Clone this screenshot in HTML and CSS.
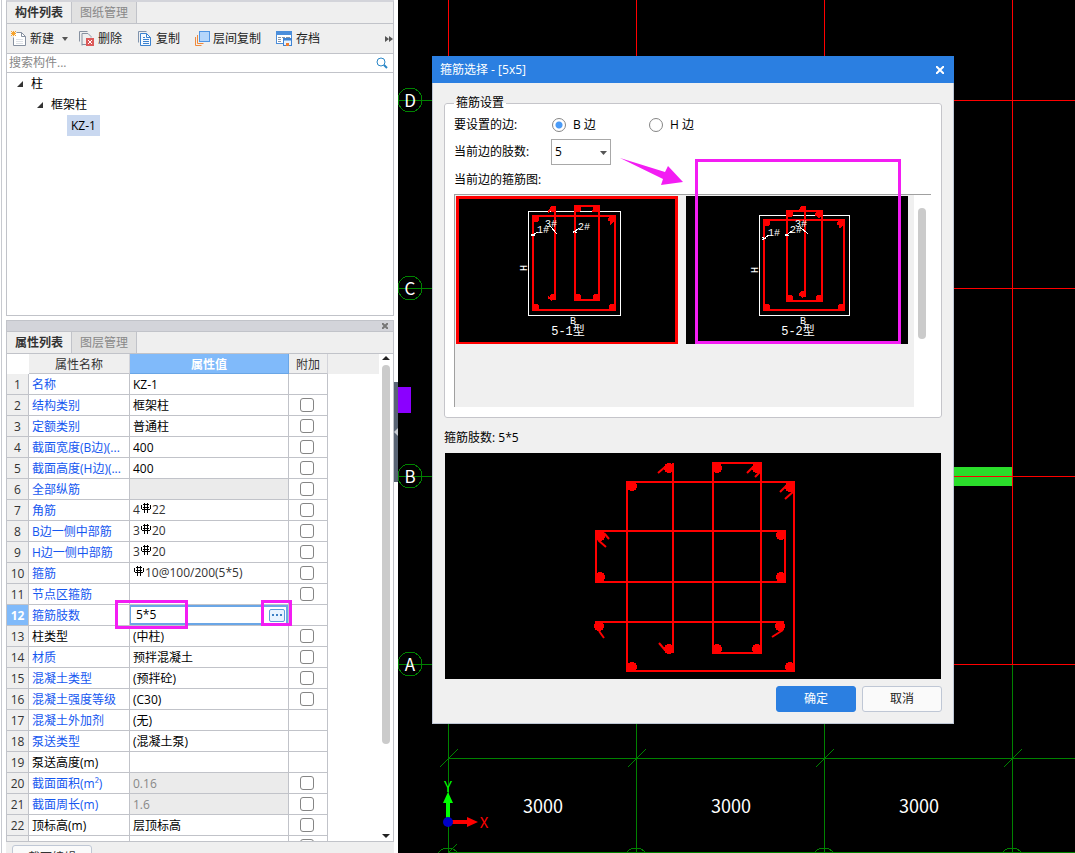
FILE: index.html
```html
<!DOCTYPE html>
<html lang="zh-CN">
<head>
<meta charset="utf-8">
<title>箍筋选择</title>
<link rel="stylesheet" href="styles.css">
</head>
<body>
<svg class="defs" aria-hidden="true">
  <symbol id="rebar" viewBox="0 0 10 10"><path d="M2 1.500h6M.5 2v4M9.500 2v4M1 6.500h8M3.500 0v10M6.500 0v10M2 4.500h6" fill="none" stroke="#000" shape-rendering="crispEdges"/></symbol>
</svg>
<div class="app">
  <aside class="sidebar">
    <section class="panel components">
      <nav class="tabs"><button class="tab active">构件列表</button><button class="tab">图纸管理</button></nav>
      <div class="toolbar">
        <button class="tool new"><svg width="15" height="15"><path d="M5.500 1.500h5l4 4v9h-12v-8" fill="#fff" stroke="#8791a0"/><path d="M10.500 1.500v4h4" fill="none" stroke="#8791a0"/><path d="M5 8.500h7M5 10.500h7M5 12.500h7" stroke="#dde1e6"/><path d="M0 0l5 5M5 0L0 5M2.500 0v5M0 2.500h5" stroke="#f7a32b"/></svg>新建<svg class="caret" width="6" height="4"><path d="M0 0h6L3 4z" fill="#555"/></svg></button>
        <button class="tool delete"><svg width="15" height="15"><path d="M.5 10.500V.5h8M3 14.500V2.500h6l3 3v1M3 13.500h4" fill="none" stroke="#8791a0"/><rect x="7" y="7" width="8" height="8" fill="#dc5959"/><path d="M9 9l4 4M13 9l-4 4" stroke="#fff"/></svg>删除</button>
        <button class="tool copy"><svg width="14" height="15"><path d="M.5 11.500V.5h8" fill="none" stroke="#7f93ad"/><path d="M2.500 2.500h6l4 4v8h-10z" fill="#f5faff" stroke="#3c82cf"/><path d="M8.500 2.500v4h4" fill="none" stroke="#3c82cf"/><path d="M5 6.500h2M5 8.500h6M5 10.500h6M5 12.500h6" stroke="#3c82cf"/></svg>复制</button>
        <button class="tool layers"><svg width="15" height="15"><path d="M.5 6v8.500h6M2.500 4v8.500h6" fill="none" stroke="#ef8a3d"/><rect x="4.500" y=".5" width="10" height="10" fill="#b5d6fb" stroke="#4f94e3"/></svg>层间复制</button>
        <button class="tool archive"><svg width="17" height="15"><rect x=".5" y=".5" width="15" height="12" fill="#fff" stroke="#4b8edb"/><path d="M0 2h16" stroke="#4b8edb" stroke-width="4"/><path d="M2 6.500h3M2 8.500h3M2 10.500h3M6 6.500h3M10 6.500h4" stroke="#8994a3"/><rect x="7.500" y="7.500" width="8" height="7" fill="#e8f3ff" stroke="#3e83d3"/><path d="M7 8.500h9" stroke="#3e83d3" stroke-width="2"/><rect x="10" y="12" width="3" height="3" fill="#ef7d31"/></svg>存档</button>
        <button class="more" aria-label="更多"><svg width="8" height="6"><path d="M0 0l4 3-4 3zM4 0l4 3-4 3z" fill="#555"/></svg></button>
      </div>
      <label class="search"><input type="text" placeholder="搜索构件..." aria-label="搜索构件"><svg width="12" height="12"><circle cx="5" cy="5" r="4" fill="none" stroke="#2a86c7"/><path d="M8 8l3 3" stroke="#2a86c7" stroke-width="2"/></svg></label>
      <ul class="tree">
        <li class="level1"><svg width="6" height="6"><path d="M6 0v6H0z" fill="#333"/></svg>柱</li>
        <li class="level2"><svg width="6" height="6"><path d="M6 0v6H0z" fill="#333"/></svg>框架柱</li>
        <li class="level3"><span>KZ-1</span></li>
      </ul>
    </section>

    <section class="panel properties">
      <div class="grip"><button aria-label="关闭"><svg width="6" height="6"><path d="M0 0l6 6M6 0L0 6" stroke="#777" stroke-width="2"/></svg></button></div>
      <nav class="tabs"><button class="tab active">属性列表</button><button class="tab">图层管理</button></nav>
      <div class="grid">
        <div class="rows">
          <table>
            <colgroup><col class="c-num"><col class="c-name"><col class="c-value"><col class="c-add"><col></colgroup>
            <thead><tr><th class="corner"></th><th>属性名称</th><th class="current">属性值</th><th class="add">附加</th><th class="rest"></th></tr></thead>
            <tbody>
              <tr><th>1</th><td class="name">名称</td><td>KZ-1</td><td></td></tr>
              <tr><th>2</th><td class="name">结构类别</td><td>框架柱</td><td><input type="checkbox" aria-label="附加 结构类别"></td></tr>
              <tr><th>3</th><td class="name">定额类别</td><td>普通柱</td><td><input type="checkbox" aria-label="附加 定额类别"></td></tr>
              <tr><th>4</th><td class="name">截面宽度(B边)(...</td><td>400</td><td><input type="checkbox" aria-label="附加 截面宽度"></td></tr>
              <tr><th>5</th><td class="name">截面高度(H边)(...</td><td>400</td><td><input type="checkbox" aria-label="附加 截面高度"></td></tr>
              <tr><th>6</th><td class="name">全部纵筋</td><td class="locked"></td><td><input type="checkbox" aria-label="附加 全部纵筋"></td></tr>
              <tr><th>7</th><td class="name">角筋</td><td class="bar">4<svg><use href="#rebar"/></svg>22</td><td><input type="checkbox" aria-label="附加 角筋"></td></tr>
              <tr><th>8</th><td class="name">B边一侧中部筋</td><td class="bar">3<svg><use href="#rebar"/></svg>20</td><td><input type="checkbox" aria-label="附加 B边一侧中部筋"></td></tr>
              <tr><th>9</th><td class="name">H边一侧中部筋</td><td class="bar">3<svg><use href="#rebar"/></svg>20</td><td><input type="checkbox" aria-label="附加 H边一侧中部筋"></td></tr>
              <tr><th>10</th><td class="name">箍筋</td><td class="bar"><svg><use href="#rebar"/></svg>10@100/200(5*5)</td><td><input type="checkbox" aria-label="附加 箍筋"></td></tr>
              <tr><th>11</th><td class="name">节点区箍筋</td><td></td><td><input type="checkbox" aria-label="附加 节点区箍筋"></td></tr>
              <tr class="selected"><th>12</th><td class="name">箍筋肢数</td><td class="editing"><div class="editor"><input type="text" value="5*5" aria-label="箍筋肢数"><button aria-label="选择箍筋"><svg width="10" height="2"><path d="M0 1h2M4 1h2M8 1h2" stroke="#3d80c4" stroke-width="2"/></svg></button></div><span class="mark mark-value"></span><span class="mark mark-button"></span></td><td></td></tr>
              <tr><th>13</th><td class="name plain">柱类型</td><td>(中柱)</td><td><input type="checkbox" aria-label="附加 柱类型"></td></tr>
              <tr><th>14</th><td class="name">材质</td><td>预拌混凝土</td><td><input type="checkbox" aria-label="附加 材质"></td></tr>
              <tr><th>15</th><td class="name">混凝土类型</td><td>(预拌砼)</td><td><input type="checkbox" aria-label="附加 混凝土类型"></td></tr>
              <tr><th>16</th><td class="name">混凝土强度等级</td><td>(C30)</td><td><input type="checkbox" aria-label="附加 混凝土强度等级"></td></tr>
              <tr><th>17</th><td class="name">混凝土外加剂</td><td>(无)</td><td></td></tr>
              <tr><th>18</th><td class="name">泵送类型</td><td>(混凝土泵)</td><td></td></tr>
              <tr><th>19</th><td class="name plain">泵送高度(m)</td><td></td><td></td></tr>
              <tr><th>20</th><td class="name">截面面积(m²)</td><td class="locked">0.16</td><td><input type="checkbox" aria-label="附加 截面面积"></td></tr>
              <tr><th>21</th><td class="name">截面周长(m)</td><td class="locked">1.6</td><td><input type="checkbox" aria-label="附加 截面周长"></td></tr>
              <tr><th>22</th><td class="name plain">顶标高(m)</td><td>层顶标高</td><td><input type="checkbox" aria-label="附加 顶标高"></td></tr>
              <tr><th></th><td></td><td></td><td><input type="checkbox" aria-label="附加"></td></tr>
            </tbody>
          </table>
        </div>
        <div class="scroll"><svg width="8" height="4"><path d="M0 4h8L4 0z" fill="#222"/></svg><span class="thumb"></span><span class="track"></span><svg width="8" height="4"><path d="M0 0h8L4 4z" fill="#222"/></svg></div>
      </div>
    </section>
    <footer class="footer"><button>截面编辑</button></footer>
    <button class="splitter" aria-label="收起面板"><svg width="4" height="8"><path d="M4 0v8L0 4z" fill="#c8ccd2"/></svg></button>
  </aside>

  <main class="canvas">
    <svg class="drawing">
      <g class="axis-green">
        <path d="M0 100.500h50M0 288.500h50M0 476.500h50M0 664.500h50M50.500 664v200M238.500 664v200M426.500 664v200M614.500 664v200M50 758.500h3000M50 852.500h3000"/>
        <path d="M42 767l18-18M230 767l18-18M418 767l18-18M606 767l18-18M50 853l9-9"/>
        <circle cx="12" cy="100" r="12"/><circle cx="12" cy="288" r="12"/><circle cx="12" cy="476" r="12"/><circle cx="12" cy="664" r="12"/>
        <circle cx="50" cy="860" r="12"/><circle cx="238" cy="860" r="12"/><circle cx="426" cy="860" r="12"/><circle cx="614" cy="860" r="12"/>
      </g>
      <rect x="0" y="387" width="13" height="26" fill="#8b00ff"/>
      <rect x="500" y="467" width="114" height="19" fill="#2bdd2b"/>
      <path class="axis-red" d="M50.500 0v664M238.500 0v664M426.500 0v664M614.500 0v664M50 100.500h3000M50 288.500h3000M50 476.500h3000M50 664.500h3000"/>
      <g class="axis-name"><text x="12" y="107">D</text><text x="12" y="295">C</text><text x="12" y="483">B</text><text x="12" y="671">A</text></g>
      <g class="dimension"><text x="145" y="813">3000</text><text x="333" y="813">3000</text><text x="521" y="813">3000</text></g>
      <path d="M48 803h4v16h-4zM50 792l5 11H45z" fill="#0f0"/>
      <path d="M54 820v4h15v-4zM69 817v10l11-5z" fill="#f00"/>
      <circle cx="50" cy="822" r="5" fill="#0000c8"/>
      <text class="gizmo" x="50" y="792" fill="#0f0">Y</text><text class="gizmo" x="86" y="828" fill="#f00">X</text>
    </svg>

    <form class="dialog" role="dialog" aria-label="箍筋选择">
      <header><h1>箍筋选择 - [5x5]</h1><button type="button" aria-label="关闭"><svg width="8" height="8"><path d="M0 0l8 8M8 0L0 8" stroke="#fff" stroke-width="2"/></svg></button></header>
      <div class="dialog-body">
        <fieldset>
          <legend>箍筋设置</legend>
          <div class="row sides"><span>要设置的边:</span><label><input type="radio" name="side" checked>B 边</label><label><input type="radio" name="side">H 边</label></div>
          <div class="row count"><label for="legs">当前边的肢数:</label><span class="select"><select id="legs"><option>5</option></select><svg width="7" height="4"><path d="M0 0h7L3.500 4z" fill="#555"/></svg></span></div>
          <div class="row caption">当前边的箍筋图:</div>
          <div class="chooser">
            <div class="gallery">
              <button type="button" class="thumbnail chosen" aria-label="5-1型"><svg viewBox="456 196 222 148">
                <rect class="outline" x="528.500" y="211.500" width="92" height="104"/>
                <path class="tie" d="M533 216h82v94h-82zM575 206h24v94h-24zM555 206v94M548 212l6-5M548 297l4 3M592 212l5-5M608 220l6-4M610 224l5-4"/>
                <g class="knot"><circle cx="536" cy="219" r="3"/><circle cx="612" cy="219" r="3"/><circle cx="536" cy="307" r="3"/><circle cx="612" cy="307" r="3"/><circle cx="578" cy="209" r="3"/><circle cx="596" cy="209" r="3"/><circle cx="578" cy="297" r="3"/><circle cx="596" cy="297" r="3"/><circle cx="553" cy="209" r="3"/><circle cx="553" cy="297" r="3"/></g>
                <path class="leader" d="M531 236l7-4M531 234l4 2M550 226l7 8M573 233l6-5M573 231l4 2"/>
                <g class="tag"><text x="537" y="233">1#</text><text x="545" y="227">3#</text><text x="578" y="230">2#</text><text x="570" y="324">B</text><text transform="rotate(-90 527 271)" x="527" y="271">H</text></g>
                <text class="type" x="568" y="335">5-1型</text></svg></button>
              <button type="button" class="thumbnail" aria-label="5-2型"><svg viewBox="686 196 222 148">
                <rect class="outline" x="759.500" y="215.500" width="90" height="100"/>
                <path class="tie" d="M764 220h80v90h-80zM787 211h35v90h-35zM805 206v91M799 211l5-4M799 294l4 3M815 215l6-4M818 218l4-4M837 224l6-4M839 228l5-5"/>
                <g class="knot"><circle cx="767" cy="223" r="3"/><circle cx="841" cy="223" r="3"/><circle cx="767" cy="307" r="3"/><circle cx="841" cy="307" r="3"/><circle cx="790" cy="214" r="3"/><circle cx="819" cy="214" r="3"/><circle cx="790" cy="298" r="3"/><circle cx="819" cy="298" r="3"/><circle cx="803" cy="209" r="3"/><circle cx="803" cy="294" r="3"/></g>
                <path class="leader" d="M762 240l7-5M762 237l4 2M785 236l7-5M785 234l4 2M800 227l8 7"/>
                <g class="tag"><text x="768" y="236">1#</text><text x="790" y="233">2#</text><text x="795" y="227">3#</text><text x="800" y="324">B</text><text transform="rotate(-90 758 273)" x="758" y="273">H</text></g>
                <text class="type" x="798" y="335">5-2型</text></svg></button>
            </div>
            <div class="gallery-scroll"><span></span></div>
          </div>
        </fieldset>
        <p class="summary">箍筋肢数: 5*5</p>
        <svg class="preview" viewBox="445 453 496 226">
          <path class="tie" d="M627 482h167v189H627zM713 463h48v190h-48zM596 531h189v51H596zM673 463v190M595 622h189"/>
          <path class="tie hook" d="M658 473l7-6M659 643l6 7M747 473l6-6M755 477l6-6M780 492l7-7M785 499l9-8M598 540l8 7M604 533l5 6M599 631l5 7M772 637l11-7"/>
          <g class="knot"><circle cx="669" cy="468" r="5"/><circle cx="669" cy="649" r="5"/><circle cx="717" cy="468" r="5"/><circle cx="757" cy="468" r="5"/><circle cx="717" cy="649" r="5"/><circle cx="757" cy="649" r="5"/><circle cx="632" cy="486" r="5"/><circle cx="790" cy="487" r="5"/><circle cx="632" cy="667" r="5"/><circle cx="790" cy="667" r="5"/><circle cx="600" cy="536" r="5"/><circle cx="781" cy="535" r="5"/><circle cx="600" cy="577" r="5"/><circle cx="781" cy="577" r="5"/><circle cx="599" cy="626" r="5"/><circle cx="780" cy="626" r="5"/></g>
        </svg>
        <div class="actions"><button type="button" class="primary">确定</button><button type="button">取消</button></div>
      </div>
      <svg class="arrow" width="64" height="28"><path d="M0 0l45 14 3-6 15 16-22 3 2-6z" fill="#f31df3"/></svg>
      <span class="mark mark-type"></span>
    </form>
  </main>
</div>
</body>
</html>
```
FILE: styles.css
```css
* { box-sizing: border-box; }
body {
  margin: 0;
  font: 12px/18px "Open Sans", "Noto Sans CJK SC", sans-serif;
  color: #000;
}
button, input, select { font: inherit; color: inherit; margin: 0; padding: 0; border: 0; background: none; }
svg { display: block; flex: none; }
.defs { position: absolute; width: 0; height: 0; }
.app { display: flex; height: 100vh; overflow: hidden; }

.sidebar {
  position: relative;
  flex: 0 0 398px;
  display: flex;
  flex-direction: column;
  padding: 0 4px 0 6px;
  background: linear-gradient(to right, #fff 1px, #c8cad0 1px, #c8cad0 2px, #fff 2px);
}
.panel { border: 1px solid #c1c3c9; }
.components { flex: 0 0 316px; border-top: 2px solid #d3d4da; margin-bottom: 4px; }
.properties { flex: 1; min-height: 0; display: flex; flex-direction: column; }

.tabs { display: flex; flex: none; height: 22px; background: #efefef; border-bottom: 1px solid #c1c3c9; }
.tab { width: 65px; background: #e1e1e1; color: #888; border-right: 1px solid #c1c3c9; line-height: 20px; }
.tab.active { background: #efefef; color: #333; font-weight: bold; }

.toolbar { display: flex; align-items: center; height: 30px; padding-left: 4px; background: #efefef; border-bottom: 1px solid #c1c3c9; color: #222; }
.tool { display: flex; align-items: center; gap: 4px; margin-right: 15px; white-space: nowrap; }
.tool.new { margin-right: 11px; }
.tool.new .caret { margin-left: 4px; }
.tool.delete { margin-right: 16px; }
.tool.layers, .tool.archive { gap: 3px; }
.more { margin-left: auto; }
.search { display: flex; align-items: center; height: 19px; padding: 0 5px 0 2px; border-bottom: 1px solid #c1c3c9; }
.search input { flex: 1; min-width: 0; height: 18px; outline: 0; }
.search input::placeholder { color: #888; opacity: 1; }
.tree { list-style: none; margin: 0; padding: 0; line-height: 21px; }
.tree li { display: flex; align-items: center; gap: 8px; height: 21px; }
.level1 { padding-left: 10px; }
.level2 { padding-left: 30px; }
.level3 { padding-left: 60px; }
.level3 span { padding: 0 4px; background: #c9d8f0; }

.grip { flex: none; height: 10px; display: flex; align-items: center; justify-content: flex-end; padding-right: 5px; background: #d3d4da; }
.properties .tabs { border-top: 1px solid #c1c3c9; height: 23px; }
.grid { flex: 1; min-height: 0; display: flex; }
.rows { flex: 1; min-width: 0; overflow: hidden; }
table { width: 100%; table-layout: fixed; border-spacing: 0; }
.c-num { width: 22px; }
.c-name { width: 101px; }
.c-value { width: 159px; }
.c-add { width: 39px; }
th, td { height: 21px; padding: 2px 0 0; border: solid #c1c3c9; border-width: 0 1px 1px 0; line-height: 18px; font-weight: normal; white-space: nowrap; }
th { background: #efefef; color: #333; }
thead th { height: 20px; line-height: 17px; border-right-color: #d3d4da; }
thead .corner { background: #fff; border-color: #fff; }
thead .current { background: #80bafa; border-color: #6aa6e6; color: #fff; font-weight: bold; }
thead .rest { border-color: #efefef; }
td { padding-left: 3px; }
td:last-child { padding: 0 0 0 11px; }
.name { color: #1557f0; overflow: hidden; }
.name.plain { color: #000; }
.locked { background: #ebebeb; color: #888; }
td.bar { padding-top: 0; color: #333; }
.bar svg { display: inline-block; width: 10px; height: 10px; margin: 0 1px; vertical-align: 1px; }
td input[type="checkbox"] { display: block; appearance: none; width: 14px; height: 14px; border: 1px solid #858585; border-radius: 3px; background: #fff; }
.selected th { background: #80bafa; color: #fff; font-weight: bold; }
td.editing { position: relative; padding: 0; }
.editor { display: flex; align-items: center; height: 20px; border: 2px solid #6aa6e6; border-left-width: 1px; padding: 0 1px 0 5px; }
.editor input { flex: 1; min-width: 0; height: 16px; line-height: 16px; outline: 0; }
.editor button { display: flex; align-items: center; justify-content: center; width: 16px; height: 13px; border: 1px solid #5d9ddc; border-radius: 2px; background: #e8f3ff; }
.mark { position: absolute; border: 3px solid #f31df3; pointer-events: none; z-index: 2; }
.mark-value { left: -15px; top: -5px; width: 73px; height: 29px; }
.mark-button { right: -4px; top: -5px; width: 31px; height: 26px; }
.scroll { flex: 0 0 14px; display: flex; flex-direction: column; align-items: center; gap: 5px; padding: 2px 3px 3px; }
.scroll .thumb { flex: 385; width: 8px; border-radius: 4px; background: #cbcbcb; }
.scroll .track { flex: 81; }
.footer { flex: 0 0 11px; overflow: hidden; margin: 0; padding: 3px 6px 0; background: #efefef; }
.footer button { width: 80px; height: 26px; border: 1px solid #bfc7d5; border-radius: 3px; background: #fafafa; color: #333; }
.splitter { position: absolute; right: 0; top: 382px; width: 4px; height: 100px; background: #596474; display: flex; align-items: center; }

.canvas { position: relative; flex: 1; min-width: 0; overflow: hidden; background: #000; }
.drawing { width: 100%; height: 100%; }
.axis-green { fill: none; stroke: #008200; shape-rendering: crispEdges; }
.axis-red { fill: none; stroke: #f00; shape-rendering: crispEdges; }
.axis-name, .dimension { fill: #fff; font: 17px "Noto Sans CJK SC", sans-serif; text-anchor: middle; }
.dimension { font-size: 18px; }
.gizmo { font: 15px "Noto Sans CJK SC", sans-serif; text-anchor: middle; }

.dialog { position: absolute; left: 34px; top: 56px; width: 522px; background: #f0f0f0; }
.dialog header { display: flex; align-items: center; justify-content: space-between; height: 27px; padding: 0 10px 0 8px; background: #2b7fe1; color: #fff; }
h1 { margin: 0; font: inherit; }
.dialog-body { padding: 11px; border: 1px solid #bfc7d5; border-top: 0; }
fieldset { min-width: 0; margin: 0; padding: 1px 10px 10px 9px; border: 1px solid #c5c5ca; border-radius: 3px; background: #fff; }
legend { margin: 0; padding: 0 2px; height: 18px; }
.row { display: grid; grid-template-columns: 97px 97px 1fr; align-items: center; }
.sides { height: 24px; margin-bottom: 2px; }
.sides label { display: flex; align-items: center; gap: 7px; padding-left: 1px; }
.sides input { appearance: none; width: 14px; height: 14px; border: 1px solid #858585; border-radius: 50%; background: #fff; }
.sides input:checked { background: radial-gradient(circle, #4a9bf7 3px, #fff 4px); }
.select { position: relative; width: 60px; }
.select select { display: block; appearance: none; width: 100%; height: 26px; padding-left: 3px; border: 1px solid #a8a8a8; border-radius: 0; background: #fff; }
.select svg { position: absolute; right: 4px; top: 12px; pointer-events: none; }
.caption { display: block; margin: 6px 0 5px; }
.chooser { display: flex; height: 213px; border-top: 1px solid #a0a0a0; border-left: 1px solid #a0a0a0; }
.gallery { flex: 1; display: flex; align-items: flex-start; gap: 8px; padding: 1px 0 0 1px; background: #f0f0f0; }
.thumbnail { position: relative; width: 222px; height: 148px; background: #000; }
.thumbnail svg { width: 222px; height: 148px; }
.chosen::after { content: ""; position: absolute; inset: 0; border: 3px solid #f00; border-bottom-width: 2px; }
.gallery-scroll { flex: 0 0 17px; padding: 13px 5px 0 4px; }
.gallery-scroll span { display: block; height: 131px; border-radius: 4px; background: #cbcbcb; }
.tie { fill: none; stroke: #f00; stroke-width: 2; shape-rendering: crispEdges; }
.hook { shape-rendering: auto; }
.knot { fill: #f00; shape-rendering: crispEdges; }
.outline, .leader { fill: none; stroke: #fff; shape-rendering: crispEdges; }
.tag { fill: #fff; font: 10px "Liberation Mono", monospace; }
.type { fill: #fff; font: 12px "Liberation Mono", "Noto Sans CJK SC", monospace; text-anchor: middle; }
.summary { margin: 11px 0 6px; }
.preview { width: calc(100% - 2px); margin: 0 1px; background: #000; }
.actions { display: flex; justify-content: flex-end; gap: 6px; margin-top: 7px; }
.actions button { width: 80px; height: 26px; border: 1px solid #bfc7d5; border-radius: 3px; background: #fafafa; color: #222; }
.actions .primary { border-color: #2b7fe1; background: #2b7fe1; color: #fff; }
.arrow { position: absolute; left: 188px; top: 102px; }
.mark-type { left: 263px; top: 103px; width: 206px; height: 185px; }
```
